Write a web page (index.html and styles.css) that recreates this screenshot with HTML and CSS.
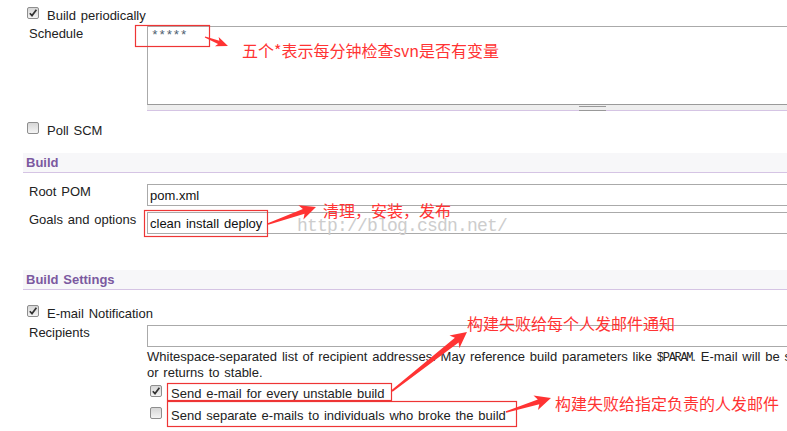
FILE: index.html
```html
<!DOCTYPE html>
<html lang="zh-CN">
<head>
  <meta charset="UTF-8">
  <meta name="viewport" content="width=device-width, initial-scale=1.0">
  <title>Jenkins 任务配置</title>
  <link rel="stylesheet" href="styles.css">
</head>
<body>
  <main class="config">
    <!-- Build triggers -->
    <div class="check-row trigger-first">
      <span class="cb checked"><svg viewBox="0 0 10 10"><path d="M1.8 5.2 L4 7.6 L8.4 1.8"/></svg></span>
      <span>Build periodically</span>
    </div>
    <div class="field-row schedule">
      <div class="label">Schedule</div>
      <div class="field">
        <textarea class="cron" spellcheck="false">*****</textarea>
        <div class="grip"></div>
      </div>
    </div>
    <div class="check-row poll">
      <span class="cb"></span>
      <span>Poll SCM</span>
    </div>

    <!-- Build -->
    <h3 class="section build">Build</h3>
    <div class="field-row pom">
      <div class="label">Root POM</div>
      <div class="field"><input type="text" value="pom.xml"></div>
    </div>
    <div class="field-row goals">
      <div class="label">Goals and options</div>
      <div class="field"><input type="text" value="clean install deploy"></div>
    </div>

    <!-- Build Settings -->
    <h3 class="section settings">Build Settings</h3>
    <div class="check-row email">
      <span class="cb checked"><svg viewBox="0 0 10 10"><path d="M1.8 5.2 L4 7.6 L8.4 1.8"/></svg></span>
      <span>E-mail Notification</span>
    </div>
    <div class="field-row recipients">
      <div class="label">Recipients</div>
      <div class="field">
        <input type="text" value="">
        <div class="help">Whitespace-separated list of recipient addresses. May reference build parameters like <code>$PARAM</code>. E-mail will be sent when a build fails, becomes unstable<br>or returns to stable.</div>
        <div class="sub-check">
          <span class="cb checked"><svg viewBox="0 0 10 10"><path d="M1.8 5.2 L4 7.6 L8.4 1.8"/></svg></span>
          <span>Send e-mail for every unstable build</span>
        </div>
        <div class="sub-check">
          <span class="cb"></span>
          <span>Send separate e-mails to individuals who broke the build</span>
        </div>
      </div>
    </div>
  </main>

  <!-- 标注 -->
  <div class="notes">
    <svg class="marks" width="787" height="431" viewBox="0 0 787 431">
      <g class="boxes">
        <rect x="135.5" y="25.5" width="74" height="21"/>
        <rect x="144.5" y="210.5" width="123" height="26"/>
        <rect x="167.5" y="383.5" width="224" height="17"/>
        <rect x="167.5" y="401.5" width="349" height="25"/>
      </g>
      <g class="arrows">
        <polygon transform="translate(205 37) rotate(21.4)" points="0,-0.6 14.7,-1.8 12.7,-5 24.7,0 12.7,5 14.7,1.8 0,0.6"/>
        <polygon transform="translate(268 224) rotate(-19.5)" points="0,-0.8 37.9,-2.5 34.9,-7.5 50.9,0 34.9,7.5 37.9,2.5 0,0.8"/>
        <polygon transform="translate(392 391) rotate(-38.2)" points="0,-1 82.4,-3 79.4,-8 95.4,0 79.4,8 82.4,3 0,1"/>
        <polygon transform="translate(506 412) rotate(-17.3)" points="0,-0.8 34.1,-2.5 31.1,-7.5 47.1,0 31.1,7.5 34.1,2.5 0,0.8"/>
      </g>
    </svg>
    <span class="watermark">http://blog.csdn.net/</span>
    <span class="note note-cron">五个*表示每分钟检查svn是否有变量</span>
    <span class="note note-goals">清理，安装，发布</span>
    <span class="note note-every">构建失败给每个人发邮件通知</span>
    <span class="note note-blame">构建失败给指定负责的人发邮件</span>
  </div>
</body>
</html>
```

FILE: styles.css
```css
:root {
  --text: #222;
  --border: #aaa;
  --section-bg: #f7f7f9;
  --section-line: #d5c4e4;
  --section-text: #7b59a0;
  --mark: #f33;
}
* { box-sizing: border-box; }
html, body { margin:0; padding:0; }
body {
  background:#fff; color:var(--text);
  font-family:"Liberation Sans", Arial, sans-serif; font-size:13px; word-spacing:1.2px;
  width:787px; height:431px; overflow:hidden; position:relative;
}
.config { width:1000px; padding-left:23px; }

/* checkbox look */
.cb {
  display:inline-block; flex:none; width:12px; height:12px;
  border:1px solid #8e8e8e; border-radius:2px;
  background:linear-gradient(#d6d6d6, #f4f4f4);
  margin-bottom:4px;
}
.cb svg { display:block; width:10px; height:10px; }
.cb path { fill:none; stroke:#333; stroke-width:1.7; }

/* rows */
.check-row { display:flex; align-items:center; gap:8px; height:20px; padding-left:4px; }
.trigger-first { margin-top:5px; }
.poll { margin-top:9px; }
.email { margin-top:13px; }

.field-row { display:grid; grid-template-columns:118px 1fr; padding-left:6px; }
.label { line-height:15px; }
.schedule { margin-top:1px; }
.pom { margin-top:11px; }
.goals { margin-top:6px; }
.recipients { margin-top:2px; }

/* inputs */
input[type=text] {
  display:block; width:100%; height:22px; margin:0;
  border:1px solid var(--border); padding:0 2px;
  font:13px "Liberation Sans", Arial, sans-serif; word-spacing:1.2px; color:#111; background:#fff;
}
.cron {
  display:block; width:100%; height:79px; margin:0; resize:none;
  border:1px solid var(--border); border-bottom-color:#9a9a9a; padding:1px 3px;
  font:13px/15px "Liberation Mono", monospace; letter-spacing:-0.6px; color:#4f5f70; background:#fff;
}
.grip {
  height:6px; background:#eee; border-bottom:1px solid var(--section-line);
  position:relative;
}
.grip::after {
  content:""; position:absolute; left:432px; top:1px; width:27px; height:3px;
  border-top:1px solid #999; border-bottom:1px solid #999;
}

/* section headers */
.section {
  margin:0; height:20px; line-height:19px; padding-left:3px;
  background:var(--section-bg); border-bottom:1px solid var(--section-line);
  color:var(--section-text); font-size:13px; font-weight:bold;
}
.build { margin-top:13px; }
.settings { margin-top:36px; }

/* help + nested options */
.help { margin-top:2px; line-height:15px; white-space:nowrap; }
.help code { font:12px "Liberation Mono", monospace; letter-spacing:-1.3px; }
.sub-check { display:flex; align-items:center; gap:9px; height:22px; padding-left:3px; }
.help + .sub-check { margin-top:2px; }

/* annotations over the screenshot */
.notes { position:absolute; left:0; top:0; width:787px; height:431px; pointer-events:none; word-spacing:0; }
.marks { position:absolute; left:0; top:0; }
.boxes rect { fill:none; stroke:#ee3535; stroke-width:1.2; }
.arrows polygon { fill:var(--mark); }
.watermark {
  position:absolute; left:297px; top:217px;
  font:18px/18px "Liberation Mono", monospace; letter-spacing:-0.8px;
  color:#cdcdcd;
}
.note {
  position:absolute; white-space:nowrap;
  font:16px/16px "Noto Sans CJK SC", sans-serif; color:var(--mark);
}
.note-cron { left:242px; top:42px; }
.note-goals { left:323px; top:202px; }
.note-every { left:467px; top:315px; }
.note-blame { left:555px; top:395px; }
```
